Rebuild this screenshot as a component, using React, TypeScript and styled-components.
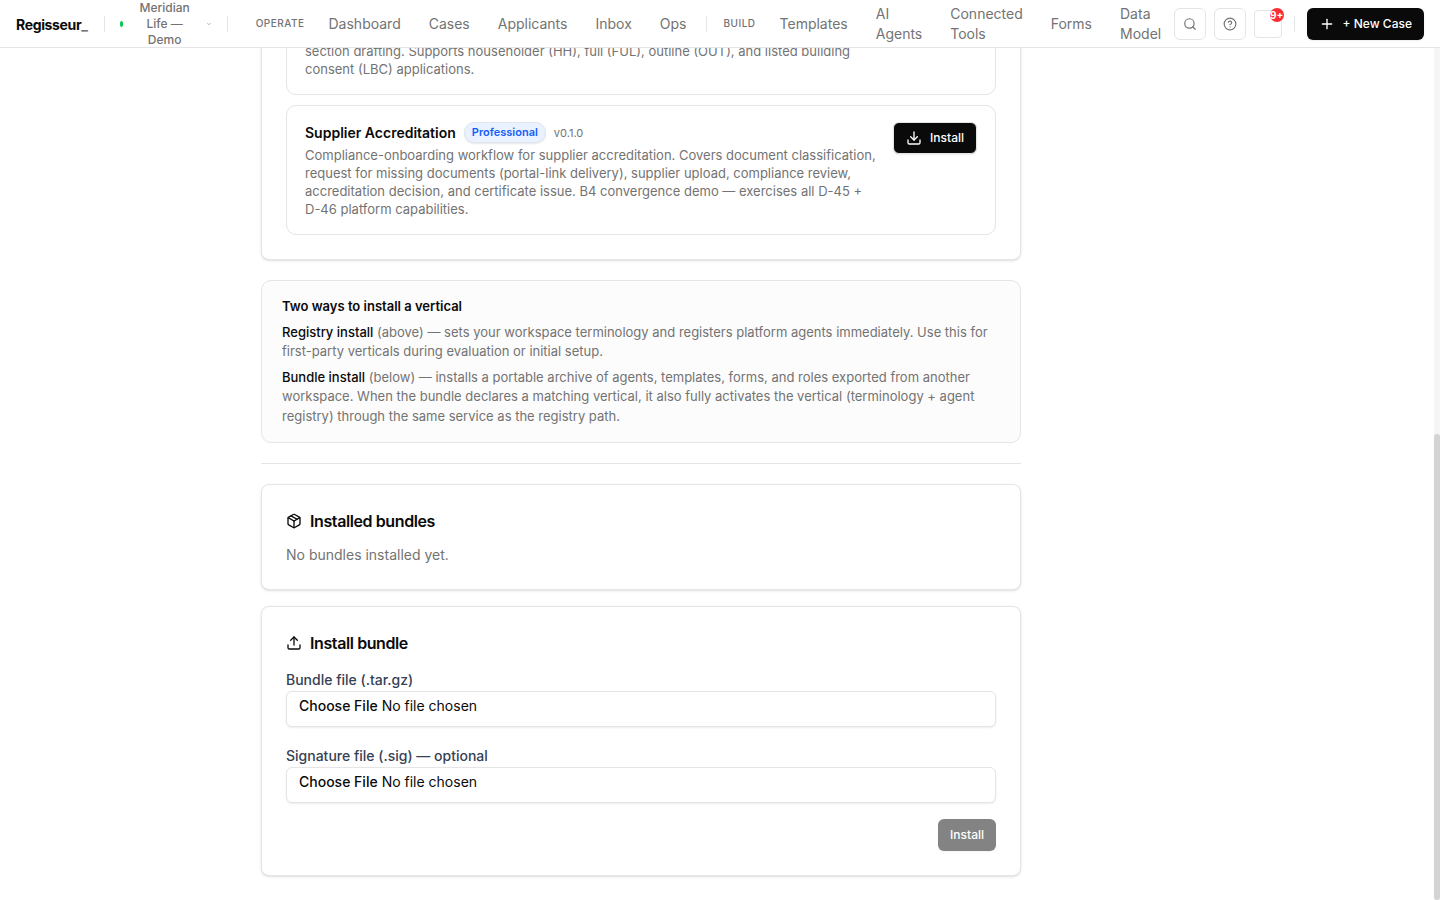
import React from "react";
import styled, { createGlobalStyle } from "styled-components";
import { ChevronDown, CircleHelp, Download, Package, Plus, Search, Upload } from "lucide-react";

const GlobalStyle = createGlobalStyle`
  *, *::before, *::after { box-sizing: border-box; }
  body {
    margin: 0;
    background: #fff;
    color: #0a0a0a;
    font-family: Inter, "Liberation Sans", sans-serif;
    font-size: 16px;
    line-height: 24px;
  }
  button, input { font: inherit; color: inherit; }
  h2, h3, p { margin: 0; }
  a { color: inherit; text-decoration: none; }
`;

const Shell = styled.div`
  display: flex;
  flex-direction: column;
  height: 100vh;
`;

const Header = styled.header`
  display: flex;
  align-items: center;
  flex: none;
  height: 48px;
  padding: 0 16px;
  border-bottom: 1px solid #e5e5e5;
`;

const Logo = styled.a`
  margin-right: 16px;
  padding-top: 2px;
  font-size: 14px;
  line-height: 20px;
  font-weight: 700;
  letter-spacing: -0.025em;
  span { color: #737373; }
`;

const Divider = styled.span<{ $gap?: number }>`
  flex: none;
  width: 1px;
  height: 16px;
  margin: 0 ${(p) => p.$gap ?? 0}px;
  background: #e5e5e5;
`;

const Workspace = styled.button`
  display: flex;
  align-items: center;
  flex: none;
  gap: 8px;
  padding: 0 15px;
  border: 0;
  background: none;
  color: #737373;
  font-size: 12px;
  line-height: 16px;
  font-weight: 500;
`;

const StatusDot = styled.span`
  width: 3px;
  height: 6px;
  border-radius: 50%;
  background: #00c950;
`;

const WorkspaceName = styled.span`
  width: 67px;
  padding: 0 6px 0 7px;
  text-align: center;
`;

const Nav = styled.nav`
  display: flex;
  align-items: center;
  flex: 1;
  gap: 4px;
  margin-left: 20px;
`;

const NavLabel = styled.span`
  padding: 0 8px;
  color: #737373;
  font-size: 10px;
  line-height: 15px;
  font-weight: 500;
  letter-spacing: 0.05em;
`;

const NavLink = styled.a<{ $stacked?: boolean }>`
  padding: 0 12px;
  width: ${(p) => (p.$stacked ? "min-content" : "auto")};
  color: #737373;
  font-size: 14px;
  line-height: 20px;
`;

const Actions = styled.div`
  display: flex;
  align-items: center;
  flex: none;
  gap: 8px;
`;

const IconButton = styled.button<{ $size: number }>`
  position: relative;
  display: flex;
  align-items: center;
  justify-content: center;
  width: ${(p) => p.$size}px;
  height: ${(p) => p.$size}px;
  padding: 0;
  border: 1px solid #e5e5e5;
  border-radius: ${(p) => (p.$size > 30 ? 6 : 4)}px;
  background: #fff;
  color: #737373;
`;

const CountBadge = styled.span`
  position: absolute;
  top: -3px;
  right: -3px;
  display: flex;
  align-items: center;
  justify-content: center;
  width: 14px;
  height: 14px;
  border-radius: 50%;
  background: #fb2c36;
  color: #fff;
  font-size: 10px;
  line-height: 14px;
  font-weight: 700;
`;

const PrimaryButton = styled.button<{ $outlined?: boolean }>`
  display: inline-flex;
  align-items: center;
  justify-content: center;
  flex: none;
  gap: 8px;
  height: 32px;
  padding: 0 12px;
  border: ${(p) => (p.$outlined ? "1px solid #e5e5e5" : "0")};
  border-radius: 6px;
  background: #0a0a0a;
  color: #fff;
  font-size: 12px;
  line-height: 16px;
  font-weight: 500;
  box-shadow: 0 1px 2px rgba(0, 0, 0, 0.08);
  &:disabled { opacity: 0.5; }
`;

const Body = styled.div`
  display: flex;
  flex: 1;
  min-height: 0;
`;

const Scroller = styled.main`
  display: flex;
  flex-direction: column-reverse;
  flex: 1;
  overflow-y: auto;
  scrollbar-width: none;
  &::-webkit-scrollbar { display: none; }
`;

const ScrollRail = styled.div`
  display: flex;
  flex-direction: column;
  justify-content: flex-end;
  width: 6px;
  background: #f5f5f5;
`;

const ScrollThumb = styled.div`
  height: 54.7%;
  border-radius: 3px;
  background: #d4d4d4;
`;

const Page = styled.div`
  width: 100%;
  max-width: 960px;
  margin: 0 auto;
  padding: 24px;
`;

const Column = styled.div`
  display: flex;
  flex-direction: column;
  gap: 20px;
  max-width: 760px;
`;

const Group = styled.div`
  display: flex;
  flex-direction: column;
  gap: 16px;
`;

const Card = styled.section`
  display: flex;
  flex-direction: column;
  padding: 24px;
  border: 1px solid #e5e5e5;
  border-radius: 8px;
  background: #fff;
  box-shadow: 0 1px 3px rgba(0, 0, 0, 0.1), 0 1px 2px -1px rgba(0, 0, 0, 0.1);
`;

const ItemList = styled.div`
  display: flex;
  flex-direction: column;
  gap: 10px;
`;

const Item = styled.article`
  display: flex;
  align-items: flex-start;
  gap: 16px;
  padding: 16px 18px;
  border: 1px solid #e5e5e5;
  border-radius: 10px;
`;

const ItemText = styled.div`
  flex: 1;
  min-width: 0;
`;

const ItemHead = styled.div`
  display: flex;
  align-items: center;
  gap: 8px;
  height: 21px;
  margin-bottom: 3px;
`;

const ItemTitle = styled.h3`
  font-size: 14px;
  line-height: 20px;
  font-weight: 600;
`;

const Tier = styled.span`
  padding: 2px 7px;
  border: 1px solid #dfe5f0;
  border-radius: 12px;
  background: #eaf1ff;
  color: #155dfc;
  font-size: 11px;
  line-height: 15px;
  font-weight: 600;
  box-shadow: 0 1px 2px rgba(0, 0, 0, 0.1);
`;

const Version = styled.span`
  color: #737373;
  font-size: 11px;
  line-height: 16px;
`;

const Description = styled.p`
  color: #737373;
  font-size: 13px;
  line-height: 18px;
`;

/* Narrower measure for an item without an action at its side */
const WideItemText = styled(ItemText)`
  padding-right: 100px;
`;

const Notice = styled.aside`
  display: flex;
  flex-direction: column;
  gap: 6px;
  padding: 16px 20px;
  border: 1px solid #e5e5e5;
  border-radius: 10px;
  background: #fcfcfc;
  color: #737373;
  font-size: 13px;
  line-height: 1.5;
  strong { color: #0a0a0a; font-weight: 500; }
`;

const NoticeTitle = styled.h3`
  color: #0a0a0a;
  font-size: 13px;
  font-weight: 600;
`;

const Rule = styled.hr`
  width: 100%;
  height: 1px;
  margin: 0;
  border: 0;
  background: #e5e5e5;
`;

const CardTitle = styled.h2`
  display: flex;
  align-items: center;
  gap: 8px;
  margin-bottom: 12px;
  font-size: 16px;
  line-height: 24px;
  font-weight: 600;
  letter-spacing: -0.025em;
`;

const Empty = styled.p`
  color: #737373;
  font-size: 14px;
  line-height: 20px;
`;

const Form = styled.form`
  display: flex;
  flex-direction: column;
  gap: 16px;
`;

const Label = styled.label`
  display: block;
  padding-top: 2px;
  color: #364153;
  font-size: 14px;
  line-height: 22px;
  font-weight: 500;
`;

const FileInput = styled.input`
  display: block;
  width: 100%;
  height: 36px;
  padding: 4px 12px;
  border: 1px solid #e5e5e5;
  border-radius: 6px;
  background: #fff;
  font-size: 14px;
  line-height: 20px;
  box-shadow: 0 1px 2px rgba(0, 0, 0, 0.08);
  &::file-selector-button {
    margin: 0 4px 0 0;
    padding: 0;
    border: 0;
    background: transparent;
    font: inherit;
    font-weight: 500;
    color: inherit;
  }
`;

const FormFooter = styled.div`
  display: flex;
  justify-content: flex-end;
`;

const operate = ["Dashboard", "Cases", "Applicants", "Inbox", "Ops"];
const build = ["Templates", "AI Agents", "Connected Tools", "Forms", "Data Model"];

export default function App() {
  return (
    <Shell>
      <GlobalStyle />
      <Header>
        <Logo href="#">Regisseur<span>_</span></Logo>
        <Divider />
        <Workspace type="button">
          <StatusDot />
          <WorkspaceName>Meridian Life — Demo</WorkspaceName>
          <ChevronDown size={6} />
        </Workspace>
        <Divider />
        <Nav>
          <NavLabel>OPERATE</NavLabel>
          {operate.map((name) => (
            <NavLink key={name} href="#">{name}</NavLink>
          ))}
          <Divider $gap={4} />
          <NavLabel>BUILD</NavLabel>
          {build.map((name) => (
            <NavLink key={name} href="#" $stacked>{name}</NavLink>
          ))}
        </Nav>
        <Actions>
          <IconButton type="button" $size={32} aria-label="Search"><Search size={14} strokeWidth={2} /></IconButton>
          <IconButton type="button" $size={32} aria-label="Help"><CircleHelp size={14} strokeWidth={2} /></IconButton>
          <IconButton type="button" $size={28} aria-label="Notifications"><CountBadge>9+</CountBadge></IconButton>
          <Divider $gap={4} />
          <PrimaryButton type="button"><Plus size={16} />+ New Case</PrimaryButton>
        </Actions>
      </Header>
      <Body>
        <Scroller>
          <Page>
            <Column>
              <Card>
                <ItemList>
                  <Item>
                    <WideItemText>
                      <Description>
                        section drafting. Supports householder (HH), full (FUL), outline (OUT), and listed building
                        consent (LBC) applications.
                      </Description>
                    </WideItemText>
                  </Item>
                  <Item>
                    <ItemText>
                      <ItemHead>
                        <ItemTitle>Supplier Accreditation</ItemTitle>
                        <Tier>Professional</Tier>
                        <Version>v0.1.0</Version>
                      </ItemHead>
                      <Description>
                        Compliance-onboarding workflow for supplier accreditation. Covers document classification,
                        request for missing documents (portal-link delivery), supplier upload, compliance review,
                        accreditation decision, and certificate issue. B4 convergence demo — exercises all D-45 +
                        D-46 platform capabilities.
                      </Description>
                    </ItemText>
                    <PrimaryButton type="button" $outlined><Download size={16} />Install</PrimaryButton>
                  </Item>
                </ItemList>
              </Card>
              <Notice>
                <NoticeTitle>Two ways to install a vertical</NoticeTitle>
                <p>
                  <strong>Registry install</strong> (above) — sets your workspace terminology and registers platform
                  agents immediately. Use this for first-party verticals during evaluation or initial setup.
                </p>
                <p>
                  <strong>Bundle install</strong> (below) — installs a portable archive of agents, templates, forms,
                  and roles exported from another workspace. When the bundle declares a matching vertical, it also
                  fully activates the vertical (terminology + agent registry) through the same service as the registry
                  path.
                </p>
              </Notice>
              <Rule />
              <Group>
                <Card>
                  <CardTitle><Package size={16} />Installed bundles</CardTitle>
                  <Empty>No bundles installed yet.</Empty>
                </Card>
                <Card>
                  <CardTitle><Upload size={16} />Install bundle</CardTitle>
                  <Form>
                    <div>
                      <Label htmlFor="bundle">Bundle file (.tar.gz)</Label>
                      <FileInput id="bundle" type="file" />
                    </div>
                    <div>
                      <Label htmlFor="signature">Signature file (.sig) — optional</Label>
                      <FileInput id="signature" type="file" />
                    </div>
                    <FormFooter>
                      <PrimaryButton type="submit" disabled>Install</PrimaryButton>
                    </FormFooter>
                  </Form>
                </Card>
              </Group>
            </Column>
          </Page>
        </Scroller>
        <ScrollRail aria-hidden="true"><ScrollThumb /></ScrollRail>
      </Body>
    </Shell>
  );
}
